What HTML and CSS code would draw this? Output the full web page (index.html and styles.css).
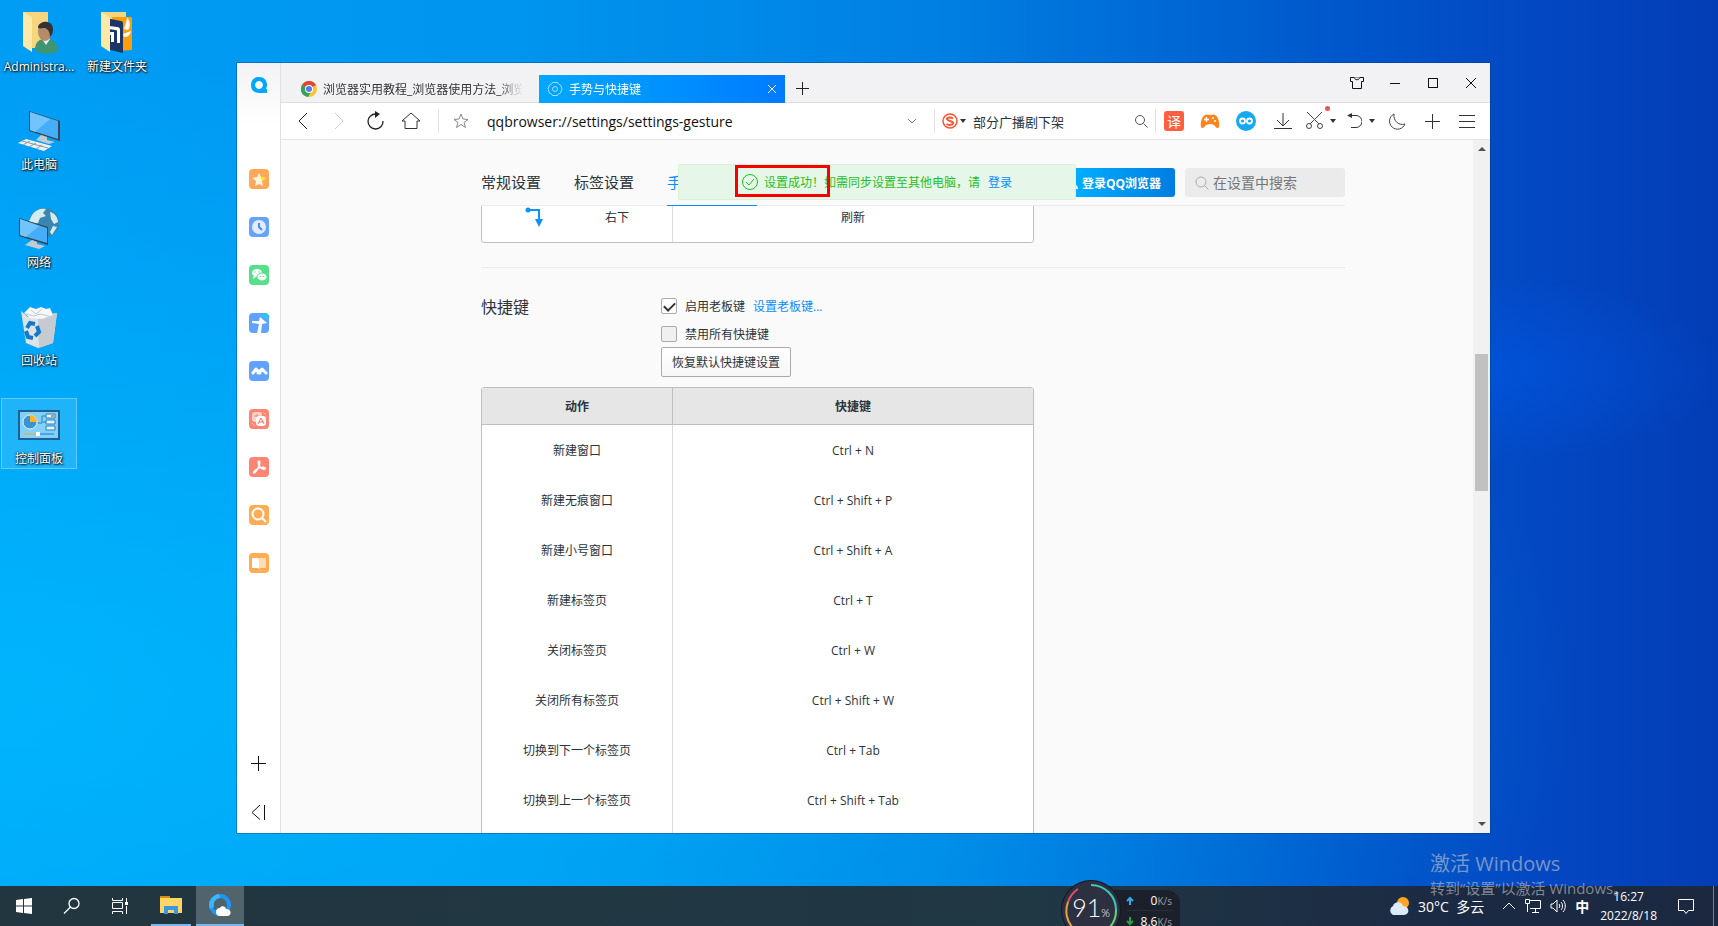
FILE: index.html
```html
<!DOCTYPE html>
<html lang="zh-CN">
<head>
  <meta charset="UTF-8" />
  <meta name="viewport" content="width=device-width, initial-scale=1.0" />
  <title>手势与快捷键</title>
  <link rel="stylesheet" href="styles.css">
</head>
<body>
  <div class="desktop">
    <div class="desktop-icons">
      <a class="shortcut" href="#">
        <svg width="42" height="42" viewBox="0 0 42 42">
          <path d="M5 0h25v36H12z" fill="#f5d57e"/>
          <path d="M5 0l9 5v35l-9-6z" fill="#ffe9a6"/>
          <path d="M17 38c0-8 4-11 11-11s12 4 12 12c-5 4-18 4-23-1z" fill="#3f9471"/>
          <path d="M24 27l4 6 4-6z" fill="#e8f1ee"/>
          <ellipse cx="27" cy="20" rx="7" ry="9" fill="#b58b69"/>
          <path d="M20 16c0-8 15-9 15 1 0 4-1 6-3 8 0-5-2-8-5-9-3 0-5 1-7 0z" fill="#333134"/>
        </svg>
        <span>Administra...</span>
      </a>
      <a class="shortcut" href="#">
        <svg width="42" height="42" viewBox="0 0 42 42">
          <path d="M5 0h25v36H12z" fill="#f5d57e"/>
          <path d="M16 5l19 0 1 1v32l-14 1z" fill="#ff9d0a"/>
          <path d="M28 17c1-4 3-8 3-12 3 4 4 9 1 13zM27 22l8-3c-1 5-4 6-7 6z" fill="#fff"/>
          <path d="M10 6l15 3c2 0 2 2 2 3v29L10 37z" fill="#1c3767"/>
          <path d="M13 14l8 1c2 0 3 1 3 3v13h-3V19c0-1-1-1-2-1l-6-1zM13 20h5v10h-3v-7h-2z" fill="#fff"/>
          <path d="M5 0l9 5v35l-9-6z" fill="#ffe9a6"/>
        </svg>
        <span>新建文件夹</span>
      </a>
      <a class="shortcut" href="#">
        <svg width="42" height="42" viewBox="0 0 42 42">
          <path d="M11 1l31 10v20L11 21z" fill="#3b4650"/>
          <path d="M12 2l28 9v18L12 20z" fill="#45aef8"/>
          <path d="M12 2l20 7-15 13-5-2z" fill="#72c4ff"/>
          <path d="M23 25l6 2v3l8 2-6 2-13-4z" fill="#c3cbd2"/>
          <path d="M8 29l26 7-8 5-26-8z" fill="#eef1f3"/>
          <path d="M4 31l26 7M12 31l-7 4M18 33l-7 4M24 35l-6 4" stroke="#8d98a1" fill="none"/>
        </svg>
        <span>此电脑</span>
      </a>
      <a class="shortcut" href="#">
        <svg width="42" height="42" viewBox="0 0 42 42">
          <circle cx="26" cy="15" r="15" fill="#3b86b1"/>
          <path d="M14 7c4-6 10-7 14-6l-3 4 3 3-6 2-2 5-6 1-3-3zM32 4c5 1 8 6 8 10l-4 2-3-5zM35 18l4 1-5 8-2-3z" fill="#d3ecef"/>
          <path d="M1 10l29 9v18L1 28z" fill="#36434e"/>
          <path d="M2 11l27 9v15L2 27z" fill="#45aef8"/>
          <path d="M2 11l19 7L8 29l-6-2z" fill="#72c4ff"/>
          <path d="M14 32l5 2v2l8 2-6 3-14-4z" fill="#c3cbd2"/>
        </svg>
        <span>网络</span>
      </a>
      <a class="shortcut" href="#">
        <svg width="42" height="42" viewBox="0 0 42 42">
          <path d="M3 5l7 6 29-4-4 30-15 5-12-5z" fill="#dfe3e6"/>
          <path d="M20 12l19-5-4 30-14 5z" fill="#c5cbd0"/>
          <path d="M6 7l6-6 6 2 5-2 5 2 4-1 3 7-11 4-12-1z" fill="#f6f7f8"/>
          <path d="M13 4l5 4 6-5M8 8l8 2 6-2 9 2" stroke="#c3c8cd" fill="none"/>
          <path d="M9 22l3-5 5 1M19 20l2 6-4 4M8 25l2 6 5 1" stroke="#1279cf" stroke-width="4" fill="none"/>
        </svg>
        <span>回收站</span>
      </a>
      <a class="shortcut selected" href="#">
        <svg width="42" height="42" viewBox="0 0 42 42">
          <rect x="0" y="6" width="42" height="30" fill="#1d6296"/>
          <rect x="2" y="8" width="38" height="26" fill="#83d1fb"/>
          <circle cx="12" cy="18" r="7" fill="#3a93d2" stroke="#e3f5ff"/>
          <path d="M12 18v-7a7 7 0 0 1 7 7z" fill="#ffb52b"/>
          <path d="M20 19h4v-7h4M28 18h-3" stroke="#2d7fb8" fill="none"/>
          <path d="M28 10h9v4h-9zM28 16h9v4h-9zM28 22h9v4h-9z" fill="#e3f5ff" stroke="#2780bb"/>
          <path d="M33 12h3" stroke="#ff8a14" stroke-width="2"/>
          <path d="M6 30h14" stroke="#ffa51d" stroke-width="1"/>
          <path d="M20 30h16" stroke="#1279cf"/>
          <rect x="18" y="28" width="4" height="4" fill="#fff"/>
        </svg>
        <span>控制面板</span>
      </a>
    </div>

    <div class="window">
      <aside class="sidebar">
        <svg class="logo" width="18" height="18" viewBox="0 0 18 18"><path fill-rule="evenodd" d="M9 1C4 1 1 4 1 9s3 8 8 8h8v-4c-1 0-1 0-1-1 1-1 1-2 1-3 0-5-3-8-8-8zm0 4c2 0 4 2 4 4s-2 4-4 4-4-2-4-4 2-4 4-4z" fill="#00a7ff"/></svg>
        <button class="app" aria-label="收藏"><svg width="20" height="20"><rect width="20" height="20" rx="4" fill="#ffa85a"/><path d="M10 4l2 4 5 1-4 3 1 5-4-2-4 2 1-5-4-3 5-1z" fill="#fff3dc"/><path d="M10 4l2 4 5 1-4 3z" fill="#ffe600"/></svg></button>
        <button class="app" aria-label="历史"><svg width="20" height="20"><rect width="20" height="20" rx="4" fill="#65a3ff"/><circle cx="10" cy="10" r="7" fill="#e1ecff"/><path d="M10 6v4l3 3" stroke="#4c8df5" stroke-width="2" fill="none"/></svg></button>
        <button class="app" aria-label="微信"><svg width="20" height="20"><rect width="20" height="20" rx="4" fill="#56e08c"/><ellipse cx="8" cy="8" rx="5" ry="4" fill="#fff"/><path d="M5 11l-1 3 3-2z" fill="#fff"/><ellipse cx="13" cy="12" rx="5" ry="4" fill="#fff" stroke="#56e08c"/><circle cx="6" cy="7" r=".7" fill="#56e08c"/><circle cx="10" cy="7" r=".7" fill="#56e08c"/><circle cx="11.500" cy="11.500" r=".7" fill="#56e08c"/><circle cx="14.500" cy="11.500" r=".7" fill="#56e08c"/></svg></button>
        <button class="app" aria-label="导航"><svg width="20" height="20"><rect width="20" height="20" rx="4" fill="#61a2ff"/><path d="M12 1h4a4 4 0 0 1 4 4c-3 0-7 0-8-4z" fill="#13d3e9"/><path d="M3 8l7 0 1-4 7 6-5 1-1 9H8l2-9-7-1z" fill="#fff"/></svg></button>
        <button class="app" aria-label="云盘"><svg width="20" height="20"><rect width="20" height="20" rx="4" fill="#61a2ff"/><path d="M4 12l3-4 4 4M9 12l4-4 4 4" stroke="#fff" stroke-width="3" stroke-linejoin="round" stroke-linecap="round" fill="none"/></svg></button>
        <button class="app" aria-label="翻译"><svg width="20" height="20"><rect width="20" height="20" rx="4" fill="#ff8473"/><rect x="3" y="3" width="10" height="10" rx="3" fill="#ffd2cb"/><path d="M5 7h5M8 5v5" stroke="#ff8473"/><rect x="7" y="7" width="10" height="10" rx="3" fill="#fff"/><path d="M9 15l3-6 3 6M10 13h4" stroke="#ff6f5d" fill="none"/><path d="M14 3l3 3M3 14l3 3" stroke="#ffc3ba"/></svg></button>
        <button class="app" aria-label="PDF"><svg width="20" height="20"><rect width="20" height="20" rx="4" fill="#ff8473"/><path d="M10 4c-2 1 0 5 2 7s5 1 4 0-5-1-8 1-4 4-3 4 4-4 5-7 1-5 0-5z" stroke="#fff" stroke-width="1.500" fill="none"/></svg></button>
        <button class="app" aria-label="搜索"><svg width="20" height="20"><rect width="20" height="20" rx="4" fill="#ffac55"/><circle cx="9" cy="9" r="5.500" stroke="#fff" stroke-width="2" fill="none"/><path d="M13 13l4 4" stroke="#fff" stroke-width="2"/></svg></button>
        <button class="app" aria-label="阅读"><svg width="20" height="20"><rect width="20" height="20" rx="4" fill="#ffac55"/><path d="M3 5h6l1 1v10l-1-1H3z" fill="#fff"/><path d="M10 6l1-1h6v10h-6l-1 1z" fill="#ffdcb2"/></svg></button>
        <button class="app add" aria-label="添加"><svg width="16" height="16"><path d="M0 8.500h15M7.500 1v15" stroke="#111"/></svg></button>
        <button class="app fold" aria-label="收起"><svg width="16" height="16"><path d="M9 1L1 8.500l8 7M13.500 1v15" stroke="#111" fill="none"/></svg></button>
      </aside>

      <div class="main">
        <header class="titlebar">
          <button class="tab">
            <svg width="16" height="16" viewBox="0 0 16 16"><circle cx="8" cy="8" r="8" fill="#f3c63c"/><path d="M8 8L1 4a8 8 0 0 1 14 0z" fill="#d9493c"/><path d="M1 4a8 8 0 0 0 6 12l4-7z" fill="#37a15a"/><circle cx="8" cy="8" r="4" fill="#fff"/><circle cx="8" cy="8" r="3" fill="#5a78e6"/></svg>
            <span>浏览器实用教程_浏览器使用方法_浏览</span>
          </button>
          <button class="tab active">
            <svg width="16" height="16" fill="none" stroke="#a9dcff"><path d="M5.500 1.500h5l1 1.500 2 1 1.500 4-1.500 4-2 1-1 1.500h-5l-1-1.500-2-1L1 8l1.500-4 2-1z"/><circle cx="8" cy="8" r="2.500"/></svg>
            <span>手势与快捷键</span>
            <svg class="close" width="10" height="10"><path d="M1 1l8 8M9 1L1 9" stroke="#fff"/></svg>
          </button>
          <button class="icon new-tab" aria-label="新标签页"><svg width="14" height="14"><path d="M0 7.500h13M6.500 1v13" stroke="#222"/></svg></button>
          <div class="controls">
            <button class="icon" aria-label="皮肤"><svg width="14" height="14" fill="none" stroke="#111"><path d="M4.500 1.500h-4v4h2v7h9v-7h2v-4h-4c0 3-5 3-5 0z"/><path d="M4.500 1.500h5" stroke="#999"/></svg></button>
            <button class="icon" aria-label="最小化"><svg width="14" height="14"><path d="M2 7.500h10" stroke="#111"/></svg></button>
            <button class="icon" aria-label="最大化"><svg width="14" height="14"><rect x="2.500" y="2.500" width="9" height="9" stroke="#111" fill="none"/></svg></button>
            <button class="icon" aria-label="关闭"><svg width="14" height="14"><path d="M2 2l10 10M12 2L2 12" stroke="#111"/></svg></button>
          </div>
        </header>

        <div class="toolbar">
          <nav class="history">
            <button class="icon" aria-label="后退"><svg width="20" height="20"><path d="M14 2L6 10l8 8" stroke="#222" fill="none"/></svg></button>
            <button class="icon" aria-label="前进"><svg width="20" height="20"><path d="M6 2l8 8-8 8" stroke="#ccc" fill="none"/></svg></button>
            <button class="icon" aria-label="刷新"><svg width="20" height="20"><path d="M11 3a7.500 7.500 0 1 0 7 7" stroke="#222" stroke-width="1.300" fill="none"/><path d="M10 0l5 3-5 4z" fill="#222"/></svg></button>
            <button class="icon" aria-label="主页"><svg width="20" height="20"><path d="M1 10l9-8 9 8h-3v7.500H4V10z" stroke="#333" fill="none"/></svg></button>
          </nav>
          <div class="address">
            <svg width="16" height="16"><path d="M8 1l2 5 5 .5-4 3 1.500 5L8 11.500l-4.500 3 1.500-5-4-3L6 6z" stroke="#888" fill="none"/></svg>
            <input type="text" aria-label="地址" value="qqbrowser://settings/settings-gesture">
            <svg width="10" height="8"><path d="M1 2l4 4 4-4" stroke="#777" fill="none"/></svg>
          </div>
          <div class="search">
            <svg width="16" height="16"><circle cx="8" cy="8" r="7" stroke="#fa5532" stroke-width="1.500" fill="none"/><path d="M11 5.500C9 4 5 4 5 6s6 2 6 4-4 2.500-6.500 1" stroke="#fa5532" stroke-width="2" fill="none"/></svg>
            <i class="caret"></i>
            <input type="text" aria-label="搜索" value="部分广播剧下架">
            <svg width="14" height="14"><circle cx="6" cy="6" r="4.500" stroke="#555" fill="none"/><path d="M9.500 9.500l4 4" stroke="#555"/></svg>
          </div>
          <div class="tools">
            <button class="icon translate" aria-label="翻译">译</button>
            <button class="icon" aria-label="游戏"><svg width="20" height="20"><path d="M5 4c2-1 3 0 5 0s3-1 5 0c3 1 5 8 4 12-1 2-3 1-4-1-1-1-2-2-5-2s-4 1-5 2c-1 2-3 3-4 1C0 12 2 5 5 4z" fill="#ff8420"/><path d="M4 8.500h5M6.500 6v5" stroke="#fff" stroke-width="1.500"/><circle cx="13" cy="7" r="1" fill="#fff"/><circle cx="15" cy="10" r="1" fill="#fff"/></svg></button>
            <button class="icon" aria-label="同步"><svg width="20" height="20"><circle cx="10" cy="10" r="10" fill="#16a9f3"/><circle cx="6.500" cy="10" r="2.500" stroke="#fff" stroke-width="1.800" fill="none"/><circle cx="13.500" cy="10" r="2.500" stroke="#fff" stroke-width="1.800" fill="none"/></svg></button>
            <button class="icon" aria-label="下载"><svg width="20" height="20"><path d="M11 2v13M5 9l6 6 6-6M2 17.500h18" stroke="#333" fill="none"/></svg></button>
            <button class="icon drop cut" aria-label="截图"><svg width="18" height="20" fill="none" stroke="#444"><path d="M2 1l12 12M17 1L5 13"/><circle cx="4" cy="15" r="2.500"/><circle cx="15" cy="15" r="2.500"/></svg><i class="caret"></i></button>
            <button class="icon drop" aria-label="恢复"><svg width="16" height="20"><path d="M4 4.500h6a6 6 0 0 1 0 12H5" stroke="#333" fill="none"/><path d="M6 2L1 4.500 6 7z" fill="#333"/></svg><i class="caret"></i></button>
            <button class="icon" aria-label="夜间"><svg width="20" height="18"><path d="M6 2a8 8 0 1 0 11 10C11 14 5 9 6 2z" stroke="#444" fill="none"/></svg></button>
            <button class="icon" aria-label="添加"><svg width="18" height="18"><path d="M1 9.500h15M8.500 2v15" stroke="#333"/></svg></button>
            <button class="icon" aria-label="菜单"><svg width="18" height="18"><path d="M1 3.500h16M1 9.500h16M1 15.500h16" stroke="#333"/></svg></button>
          </div>
        </div>

        <div class="viewport">
          <div class="page">
            <div class="page-head">
              <nav>
                <a href="#">常规设置</a>
                <a href="#">标签设置</a>
                <a href="#" class="current">手势与快捷键</a>
              </nav>
              <button class="login"><svg width="12" height="12"><circle cx="6" cy="3" r="3" fill="#fff"/><path d="M0 12c0-7 12-7 12 0z" fill="#fff"/></svg>登录QQ浏览器</button>
              <label class="find">
                <svg width="14" height="14"><circle cx="6" cy="6" r="5" stroke="#aaa" fill="none"/><path d="M9.500 9.500l4 4" stroke="#aaa"/></svg>
                <input type="text" aria-label="在设置中搜索" placeholder="在设置中搜索">
              </label>
            </div>

            <div class="page-body">
              <table class="grid gestures">
                <tr>
                  <td><div class="gesture"><svg width="18" height="20"><path d="M3 3h11v11" stroke="#0a93fb" stroke-width="2" fill="none"/><circle cx="3" cy="3" r="2.500" fill="#0a93fb"/><path d="M10 12h8l-4 8z" fill="#0a93fb"/></svg><span>右下</span></div></td>
                  <td>刷新</td>
                </tr>
              </table>
              <section class="hotkeys">
                <h2>快捷键</h2>
                <div class="options">
                  <div class="option"><input type="checkbox" id="boss" checked><label for="boss">启用老板键</label><a href="#">设置老板键...</a></div>
                  <div class="option"><input type="checkbox" id="disable"><label for="disable">禁用所有快捷键</label></div>
                  <button class="reset">恢复默认快捷键设置</button>
                </div>
              </section>
              <table class="grid">
                <thead><tr><th>动作</th><th>快捷键</th></tr></thead>
                <tbody>
                  <tr><td>新建窗口</td><td>Ctrl + N</td></tr>
                  <tr><td>新建无痕窗口</td><td>Ctrl + Shift + P</td></tr>
                  <tr><td>新建小号窗口</td><td>Ctrl + Shift + A</td></tr>
                  <tr><td>新建标签页</td><td>Ctrl + T</td></tr>
                  <tr><td>关闭标签页</td><td>Ctrl + W</td></tr>
                  <tr><td>关闭所有标签页</td><td>Ctrl + Shift + W</td></tr>
                  <tr><td>切换到下一个标签页</td><td>Ctrl + Tab</td></tr>
                  <tr><td>切换到上一个标签页</td><td>Ctrl + Shift + Tab</td></tr>
                  <tr><td></td><td></td></tr>
                </tbody>
              </table>
            </div>

            <div class="toast">
              <svg width="16" height="16" fill="none" stroke="#1fbf1f"><circle cx="8" cy="8" r="7.500"/><path d="M4 8l3 3 5-6"/></svg>
              <span>设置成功！如需同步设置至其他电脑，请</span>
              <a href="#">登录</a>
              <i class="marker"></i>
            </div>
          </div>
          <div class="scrollbar"><i class="up"></i><i class="thumb"></i><i class="down"></i></div>
        </div>
      </div>
    </div>

    <footer class="taskbar">
      <button class="task" aria-label="开始"><svg width="16" height="16" fill="#fff"><path d="M0 2l7-1v6.500H0zM8 1l8-1v7.500H8zM0 8.500h7V15l-7-1zM8 8.500h8V16l-8-1z"/></svg></button>
      <button class="task" aria-label="搜索"><svg width="18" height="18"><circle cx="11" cy="6.500" r="5" stroke="#fff" stroke-width="1.300" fill="none"/><path d="M7.500 10L1 16.500" stroke="#fff" stroke-width="1.300"/></svg></button>
      <button class="task" aria-label="任务视图"><svg width="18" height="18" stroke="#fff" fill="none"><path d="M1.500 1v2.500h10V1M1.500 17v-2.500h10V17M1.500 5.500h10v6h-10zM15.500 1v4M15.500 9v8"/><rect x="14" y="5" width="3" height="3" fill="#fff" stroke="none"/></svg></button>
      <button class="task running" aria-label="文件资源管理器"><svg width="22" height="20"><path d="M0 1h10v3H0z" fill="#d69003"/><path d="M0 3h22v15H0z" fill="#ffd567"/><path d="M4 11h14v8h-4v-4H8v4H4z" fill="#3b97e0"/></svg></button>
      <button class="task running open" aria-label="QQ浏览器"><svg width="24" height="24"><circle cx="12" cy="12" r="9" stroke="#2296f5" stroke-width="4" fill="none"/><path d="M11 1a11 11 0 0 0-9 15l4-2a7 7 0 0 1 6-9z" fill="#38b9ff"/><path d="M12 23a4 4 0 0 1 0-8c1-3 6-2 6 1 6 0 6 7 1 7z" fill="#fff"/></svg></button>
      <div class="tray">
        <svg width="22" height="18"><circle cx="15" cy="6" r="6" fill="#ffa51f"/><path d="M5 18a5 5 0 0 1 0-9c1-5 9-5 10 0 7 0 7 9 1 9z" fill="#dceafa"/></svg>
        <span class="weather">30°C&nbsp; 多云</span>
        <svg width="14" height="10"><path d="M1 8l6-6 6 6" stroke="#fff" fill="none"/></svg>
        <svg width="18" height="16" stroke="#fff" fill="none"><path d="M5.500 2.500h11v8H6M8 14.500h7M11.500 10.500v4M3.500 6v8M1.500 1.500h4v4h-4z"/></svg>
        <svg width="17" height="16" stroke="#fff" fill="none"><path d="M1 6h2l4-4v12l-4-4H1zM9 6c1 1 1 3 0 4M11 4c2 2 2 6 0 8M13 2c3 3 3 9 0 12"/></svg>
        <span class="ime">中</span>
        <time>16:27<br>2022/8/18</time>
        <svg class="notice" width="18" height="18" stroke="#fff" fill="none"><path d="M1.500 2.500h15v11h-5l-2.500 3-2-3H1.500z"/></svg>
        <i class="peek"></i>
      </div>
    </footer>

    <div class="monitor">
      <div class="gauge">
        <svg width="58" height="58" fill="none" stroke-width="2"><path d="M29 4a25 25 0 0 1 25 25" stroke="#3ec9b4"/><path d="M54 29a25 25 0 0 1-7 18" stroke="#6fd07a"/><path d="M16 8A25 25 0 0 0 6 21" stroke="#e2506a"/><path d="M6 21a25 25 0 0 0 5 26" stroke="#e8a33b"/></svg>
        <span>91<small>%</small></span>
      </div>
      <div class="rates">
        <p><svg width="8" height="9"><path d="M4 9V2M1 5l3-3 3 3" stroke="#35a7ee" stroke-width="2" fill="none"/></svg><span>0<small>K/s</small></span></p>
        <p><svg width="8" height="9"><path d="M4 0v7M1 4l3 3 3-3" stroke="#25a53a" stroke-width="2" fill="none"/></svg><span>8.6<small>K/s</small></span></p>
      </div>
    </div>

    <div class="watermark">
      <strong>激活 Windows</strong>
      <span>转到“设置”以激活 Windows。</span>
    </div>
  </div>
</body>
</html>
```
FILE: styles.css
```css
* {
  box-sizing: border-box;
}

body {
  margin: 0;
  font-family: "Open Sans", "Noto Sans CJK SC", sans-serif;
  font-size: 12px;
  color: #2b333b;
}

a {
  text-decoration: none;
  color: #0a8cff;
}

button, input {
  font: inherit;
  color: inherit;
  padding: 0;
  border: 0;
  background: none;
}

svg {
  display: block;
  flex-shrink: 0;
}

.desktop {
  position: relative;
  display: flex;
  flex-direction: column;
  justify-content: space-between;
  height: 100vh;
  overflow: hidden;
  background:
    radial-gradient(ellipse at 86% 40%, rgba(0, 90, 235, 0.5), transparent 12%),
    radial-gradient(ellipse at 0% 75%, rgba(0, 190, 255, 0.7), transparent 65%),
    linear-gradient(90deg, #009df5 0%, #0095ef 30%, #007fe2 55%, #0057cb 78%, #0347c2 90%, #033db5 100%);
}

/* desktop shortcuts */
.desktop-icons {
  display: grid;
  grid-template-columns: 76px 76px;
  grid-auto-rows: 71px;
  gap: 27px 2px;
  padding: 6px 1px;
  justify-content: start;
}

.shortcut {
  display: flex;
  flex-direction: column;
  align-items: center;
  gap: 4px;
  padding-top: 6px;
  line-height: 18px;
  color: #fff;
  text-shadow: 1px 1px 2px #000, 0 0 2px #000;
}

.shortcut:nth-child(n+3) {
  grid-column: 1;
}

.shortcut.selected {
  background: rgba(255, 255, 255, 0.12);
  outline: 1px solid rgba(255, 255, 255, 0.3);
  outline-offset: -1px;
}

/* browser window */
.window {
  position: absolute;
  top: 63px;
  right: 228px;
  bottom: 93px;
  left: 237px;
  display: flex;
  background: #fff;
  outline: 1px solid rgba(0, 50, 110, 0.35);
}

.sidebar {
  display: flex;
  flex-direction: column;
  align-items: center;
  gap: 28px;
  width: 44px;
  padding: 13px 0;
  background: linear-gradient(#f2f2f4, #fff 60px);
  border-right: 1px solid #e0e0e0;
}

.logo {
  margin-bottom: 47px;
}

.add {
  margin-top: auto;
}

.fold {
  margin-top: 5px;
}

.main {
  flex: 1;
  min-width: 0;
  display: flex;
  flex-direction: column;
}

.titlebar {
  display: flex;
  align-items: flex-end;
  height: 40px;
  padding-left: 13px;
  background: #f2f2f4;
  border-bottom: 1px solid #dfdfe1;
}

.tab {
  display: flex;
  align-items: center;
  gap: 6px;
  width: 245px;
  height: 28px;
  margin-bottom: -1px;
  padding: 0 16px 0 7px;
  text-align: left;
  color: #333;
}

.tab span {
  flex: 1;
  overflow: hidden;
  white-space: nowrap;
  mask-image: linear-gradient(90deg, #000 88%, transparent);
}

.tab.active {
  width: 246px;
  padding: 0 8px;
  color: #fff;
  background: linear-gradient(90deg, #00a8ff, #007bff);
}

.icon {
  display: flex;
  align-items: center;
  justify-content: center;
}

.new-tab {
  width: 36px;
  height: 28px;
}

.controls {
  display: flex;
  align-self: flex-start;
  gap: 24px;
  margin-left: auto;
  padding: 13px 12px 0 0;
}

.toolbar {
  display: flex;
  align-items: center;
  height: 37px;
  border-bottom: 1px solid #e4e4e4;
}

.history {
  display: flex;
  gap: 16px;
  padding: 0 17px 0 12px;
}

.address,
.search,
.tools {
  display: flex;
  align-items: center;
  height: 24px;
  border-left: 1px solid #e2e2e2;
}

.address {
  flex: 1;
  gap: 18px;
  padding: 0 17px 0 14px;
}

.address input {
  flex: 1;
  min-width: 0;
  font-size: 14px;
  color: #111;
}

.search {
  gap: 2px;
  width: 221px;
  padding: 0 7px;
}

.search input {
  flex: 1;
  min-width: 0;
  margin-left: 5px;
  font-size: 13px;
}

.caret {
  border: 3px solid transparent;
  border-top: 4px solid #333;
  border-bottom: 0;
}

.tools {
  gap: 16px;
  padding: 0 14px 0 8px;
}

.translate {
  width: 20px;
  height: 20px;
  border-radius: 3px;
  font-size: 14px;
  color: #fff;
  background: #ff5e42;
}

.drop {
  gap: 7px;
  margin: 0 -3px;
}

.cut {
  position: relative;
}

.cut::after {
  content: "";
  position: absolute;
  top: -5px;
  right: 6px;
  width: 5px;
  height: 5px;
  border-radius: 50%;
  background: #f2505a;
}

/* settings page */
.viewport {
  flex: 1;
  min-height: 0;
  display: flex;
  background: #fafafa;
}

.page {
  position: relative;
  flex: 1;
  display: flex;
  flex-direction: column;
  padding: 0 128px 0 200px;
}

.page-head {
  display: flex;
  align-items: center;
  height: 66px;
  padding-top: 20px;
  border-bottom: 1px solid #ebebeb;
}

.page-head nav {
  display: flex;
  gap: 33px;
  margin-right: auto;
  font-size: 15px;
  line-height: 46px;
}

.page-head nav a {
  color: #2b333b;
  border-bottom: 1px solid transparent;
}

.page-head nav .current {
  color: #0a8cff;
  border-color: #0a8cff;
}

.login {
  display: flex;
  align-items: center;
  gap: 4px;
  height: 29px;
  padding: 0 14px;
  border-radius: 3px;
  font-weight: bold;
  color: #fff;
  background: linear-gradient(90deg, #00adff 20%, #007de0);
}

.find {
  display: flex;
  align-items: center;
  gap: 4px;
  width: 160px;
  height: 29px;
  margin-left: 10px;
  padding: 0 10px;
  border-radius: 3px;
  font-size: 14px;
  background: #ebebeb;
}

.find input {
  flex: 1;
  min-width: 0;
}

.find input::placeholder {
  color: #757575;
}

.page-body {
  flex: 1;
  min-height: 0;
  overflow: hidden;
}

.grid {
  width: 553px;
  table-layout: fixed;
  border: 1px solid #bfbfbf;
  border-radius: 3px;
  border-spacing: 0;
  background: #fff;
  text-align: center;
}

.grid th,
.grid td {
  height: 50px;
  padding: 0;
}

.grid th {
  height: 37px;
  background: #e6e6e6;
  border-bottom: 1px solid #bfbfbf;
}

.grid tr > :first-child {
  width: 191px;
  border-right: 1px solid #dcdcdc;
}

.grid th:first-child {
  border-color: #bfbfbf;
}

.gestures {
  margin-top: -15px;
}

.gesture {
  display: flex;
  align-items: center;
  gap: 62px;
  padding-left: 43px;
}

.hotkeys {
  display: flex;
  margin-top: 24px;
  padding: 24px 0 10px;
  border-top: 1px solid #ebebeb;
}

.hotkeys h2 {
  width: 180px;
  margin: 0;
  font-size: 16px;
  font-weight: normal;
  line-height: 30px;
}

.options {
  display: flex;
  flex-direction: column;
  align-items: flex-start;
}

.option {
  display: flex;
  align-items: center;
  height: 28px;
}

.option:nth-child(2) {
  height: 27px;
}

.option input {
  appearance: none;
  width: 16px;
  height: 16px;
  margin: 0 8px 0 0;
  border: 1px solid #aaa;
  border-radius: 2px;
  background: #f0f0f0;
}

.option input:checked {
  background: #fff;
}

.option input:checked::before {
  content: "";
  display: block;
  width: 9px;
  height: 5px;
  margin: 3px 2px;
  border: solid #333;
  border-width: 0 0 2px 2px;
  transform: rotate(-45deg);
}

.option a {
  margin-left: 8px;
}

.reset {
  height: 30px;
  padding: 0 10px;
  border: 1px solid #aaa;
  border-radius: 2px;
  background: linear-gradient(#fff, #f7f7f7);
}

.toast {
  position: absolute;
  top: 24px;
  left: 50%;
  transform: translateX(-50%);
  display: flex;
  align-items: center;
  justify-content: center;
  gap: 6px;
  width: 398px;
  height: 36px;
  border: 1px solid #d8f2d5;
  border-radius: 2px;
  white-space: nowrap;
  color: #1fbf1f;
  background: #e6f7e9;
}

.toast a {
  margin-left: 2px;
}

.marker {
  position: absolute;
  top: 0;
  left: 56px;
  width: 95px;
  height: 32px;
  border: 3px solid #f80000;
}

.scrollbar {
  display: flex;
  flex-direction: column;
  align-items: center;
  width: 17px;
  padding: 7px 0;
  background: #f1f1f1;
}

.up,
.down {
  border: 4px solid transparent;
  border-top: 0;
  border-bottom-color: #505050;
}

.down {
  margin-top: auto;
  border-top: 4px solid #505050;
  border-bottom: 0;
}

.thumb {
  width: 13px;
  height: 137px;
  margin-top: 203px;
  background: #c1c1c1;
}

/* taskbar */
.taskbar {
  display: flex;
  height: 40px;
  color: #fff;
  background: linear-gradient(90deg, #22363f, #203744 60%, #1b2a44 85%, #1b2840);
}

.task {
  display: flex;
  align-items: center;
  justify-content: center;
  width: 48px;
}

.task.running {
  width: 40px;
  margin-left: 7px;
  border-bottom: 2px solid #76b9ed;
}

.task.open {
  width: 48px;
  margin-left: 5px;
  background: #51636b;
}

.tray {
  display: flex;
  align-items: center;
  gap: 8px;
  margin-left: auto;
  padding-right: 4px;
  font-size: 14px;
}

.weather {
  margin-right: 10px;
}

.ime {
  font-weight: bold;
}

.tray time {
  margin: 0 12px 0 3px;
  font-size: 12px;
  line-height: 19px;
  text-align: center;
}

.peek {
  height: 40px;
  margin-left: 10px;
  border-left: 1px solid #76808c;
}

/* speed widget, hangs over the taskbar */
.monitor {
  position: absolute;
  right: 538px;
  bottom: -13px;
  display: flex;
  align-items: flex-end;
  color: #fff;
}

.gauge {
  position: relative;
  z-index: 1;
  display: grid;
  place-items: center;
  width: 58px;
  height: 58px;
  margin-right: -22px;
  border-radius: 50%;
  background: #2c3040;
  box-shadow: 0 0 0 1px #151923;
}

.gauge > * {
  grid-area: 1 / 1;
}

.gauge span {
  font-family: Lato, sans-serif;
  font-size: 25px;
  font-weight: 300;
  line-height: 30px;
}

.gauge small {
  font-size: 11px;
}

.rates {
  width: 82px;
  height: 49px;
  padding: 0 8px 0 28px;
  border-radius: 14px;
  background: #1c202b;
}

.rates p {
  display: flex;
  align-items: center;
  justify-content: space-between;
  height: 21px;
  margin: 0;
  border-bottom: 1px solid #2a2e3a;
}

.rates small {
  font-size: 10px;
  color: #9a9ea8;
}

.watermark {
  position: absolute;
  right: 90px;
  bottom: 26px;
  display: flex;
  flex-direction: column;
  width: 198px;
  line-height: 24px;
  color: rgba(200, 200, 200, 0.6);
  white-space: nowrap;
}

.watermark strong {
  font-size: 20px;
  font-weight: normal;
}

.watermark span {
  font-size: 15px;
}
```
